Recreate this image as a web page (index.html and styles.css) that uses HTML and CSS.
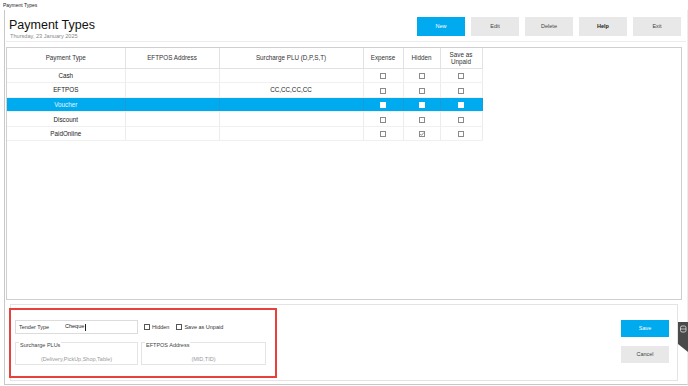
FILE: index.html
```html
<!DOCTYPE html>
<html>
<head>
<meta charset="utf-8">
<link rel="stylesheet" href="styles.css">
</head>
<body>
<div class="titlebar">Payment Types</div>
<div class="window">
  <div class="header">
    <div class="titleblock">
      <div class="title">Payment Types</div>
      <div class="date">Thursday, 23 January 2025</div>
    </div>
    <div class="toolbar">
      <div class="btn primary">New</div>
      <div class="btn">Edit</div>
      <div class="btn">Delete</div>
      <div class="btn bold">Help</div>
      <div class="btn">Exit</div>
    </div>
  </div>
  <div class="gridframe">
    <table class="grid">
      <colgroup>
        <col class="c1"><col class="c2"><col class="c3"><col class="c4"><col class="c5"><col class="c6">
      </colgroup>
      <thead>
        <tr><th>Payment Type</th><th>EFTPOS Address</th><th>Surcharge PLU (D,P,S,T)</th><th>Expense</th><th>Hidden</th><th>Save as<br>Unpaid</th></tr>
      </thead>
      <tbody>
        <tr><td>Cash</td><td></td><td></td><td><span class="cb"></span></td><td><span class="cb"></span></td><td><span class="cb"></span></td></tr>
        <tr><td>EFTPOS</td><td></td><td>CC,CC,CC,CC</td><td><span class="cb"></span></td><td><span class="cb"></span></td><td><span class="cb"></span></td></tr>
        <tr class="sel"><td>Voucher</td><td></td><td></td><td><span class="cb"></span></td><td><span class="cb"></span></td><td><span class="cb"></span></td></tr>
        <tr><td>Discount</td><td></td><td></td><td><span class="cb"></span></td><td><span class="cb"></span></td><td><span class="cb"></span></td></tr>
        <tr><td>PaidOnline</td><td></td><td></td><td><span class="cb"></span></td><td><span class="cb checked"><svg viewBox="0 0 6 6" width="6" height="6"><path d="M1.3 3.1 L2.5 4.3 L4.8 1.6" fill="none" stroke="#666" stroke-width="0.8"/></svg></span></td><td><span class="cb"></span></td></tr>
      </tbody>
    </table>
  </div>
  <div class="editpanel">
    <div class="highlight">
      <div class="row1">
        <div class="tender">
          <span class="tlabel">Tender Type</span>
          <span class="tvalue">Cheque<span class="caret"></span></span>
        </div>
        <label class="chk"><span class="cb"></span>Hidden</label>
        <label class="chk"><span class="cb"></span>Save as Unpaid</label>
      </div>
      <div class="row2">
        <div class="fs">
          <div class="legend">Surcharge PLUs</div>
          <div class="ph">(Delivery,PickUp,Shop,Table)</div>
        </div>
        <div class="fs">
          <div class="legend">EFTPOS Address</div>
          <div class="ph">(MID,TID)</div>
        </div>
      </div>
    </div>
    <div class="actions">
      <div class="btn primary">Save</div>
      <div class="btn">Cancel</div>
    </div>
  </div>
  <div class="sidetab">
    <svg viewBox="0 0 10 30" width="10" height="30">
      <path d="M0 0 H10 V30 L0 22 Z" fill="#4a4a4a"/>
      <rect x="2.5" y="4" width="5.5" height="6" rx="1.6" fill="none" stroke="#d8d8d8" stroke-width="0.9"/>
      <path d="M2.5 7 H8" stroke="#d8d8d8" stroke-width="0.8"/>
    </svg>
  </div>
</div>
</body>
</html>
```

FILE: styles.css
```css
* { box-sizing: border-box; }
html, body { margin: 0; padding: 0; background: #fff; }
body {
  width: 688px;
  height: 386px;
  overflow: hidden;
  font-family: "Liberation Sans", Arial, sans-serif;
  color: #222;
  position: relative;
}
.titlebar {
  height: 10px;
  font-size: 5px;
  line-height: 10px;
  padding-left: 3px;
  color: #222;
}
.window {
  margin-left: 4px;
  width: 684px;
  height: 375px;
  border-left: 1px solid #c8c8c8;
  border-bottom: 1px solid #c8c8c8;
  border-right: 1px solid #ececec;
  padding: 0 5px 0 1px;
}
.header {
  height: 32px;
  display: flex;
  justify-content: space-between;
  align-items: flex-start;
  border-bottom: 1px solid #ececec;
  margin-right: -4px;
}
.titleblock { padding-left: 3px; padding-top: 8px; }
.title { font-size: 12.5px; line-height: 14px; color: #111; }
.date { font-size: 5.6px; line-height: 8px; color: #888; padding-left: 1px; }
.toolbar {
  display: flex;
  gap: 6px;
  padding-top: 7px;
  padding-right: 5px;
}
.btn {
  width: 48px;
  height: 19px;
  background: #e8e8e8;
  font-size: 5.5px;
  line-height: 19px;
  text-align: center;
  color: #444;
}
.btn.primary { background: #00aaee; color: #fff; }
.btn.bold { font-weight: bold; color: #222; }

.gridframe {
  margin-top: 5px;
  height: 253px;
  border: 1px solid #cfcfcf;
}
.grid {
  border-collapse: collapse;
  table-layout: fixed;
  width: 475px;
  font-size: 6.3px;
}
.c1 { width: 118px; }
.c2 { width: 94px; }
.c3 { width: 144px; }
.c4 { width: 40px; }
.c5 { width: 37px; }
.c6 { width: 42px; }
.grid th {
  height: 20px;
  font-weight: normal;
  color: #333;
  border-right: 1px solid #e2e2e2;
  border-bottom: 1px solid #e2e2e2;
  line-height: 7px;
  padding: 0;
}
.grid td {
  height: 14.6px;
  padding: 0;
  text-align: center;
  color: #222;
  border-right: 1px solid #ececec;
  border-bottom: 1px solid #f0f0f0;
}
.grid tr.sel td { background: #00aaee; color: #e8f6ff; border-right-color: #1a9ad6; }
.cb {
  display: inline-block;
  width: 6px;
  height: 6px;
  border: 1px solid #8a8a8a;
  background: #fff;
  vertical-align: middle;
  position: relative;
}
.cb svg { position: absolute; left: -1px; top: -1px; }
.sel .cb { border-color: #fff; }

.editpanel {
  margin-top: 4px;
  margin-left: 4px;
  margin-right: 4px;
  height: 77px;
  border: 1px solid #e4e4e4;
  display: flex;
  justify-content: space-between;
}
.highlight {
  margin-left: -2px;
  margin-top: 3px;
  width: 268px;
  height: 70px;
  border: 2px solid #e8403a;
  padding: 10px 0 0 4px;
}
.row1 { display: flex; align-items: center; height: 14px; }
.tender {
  width: 123px;
  height: 14px;
  border: 1px solid #dcdcdc;
  display: flex;
  align-items: center;
  font-size: 5.5px;
  padding-left: 3px;
}
.tlabel { width: 46px; color: #333; }
.tvalue { color: #222; }
.caret { display: inline-block; width: 0.5px; height: 7px; background: #222; vertical-align: middle; margin-left: 0.5px; }
.chk {
  display: flex;
  align-items: center;
  font-size: 5.5px;
  color: #333;
  margin-left: 6px;
}
.chk .cb { margin-right: 2px; border-color: #555; }
.chk + .chk { margin-left: 7px; }
.row2 { display: flex; gap: 3px; margin-top: 8px; }
.fs {
  width: 123px;
  height: 23px;
  border: 1px solid #e4e4e4;
  position: relative;
}
.fs + .fs { width: 125px; }
.legend {
  position: absolute;
  left: 3px;
  top: -1px;
  font-size: 5.5px;
  line-height: 6px;
  color: #444;
  background: #fff;
  padding: 0 1px;
}
.ph {
  text-align: center;
  font-size: 5.5px;
  color: #999;
  padding-top: 13px;
}
.actions {
  display: flex;
  flex-direction: column;
  gap: 9px;
  padding-top: 15px;
  padding-right: 8px;
}
.actions .btn { height: 17px; line-height: 17px; }
.sidetab {
  position: absolute;
  right: 0;
  top: 322px;
  width: 10px;
  height: 30px;
}
.sidetab svg { display: block; }
```
